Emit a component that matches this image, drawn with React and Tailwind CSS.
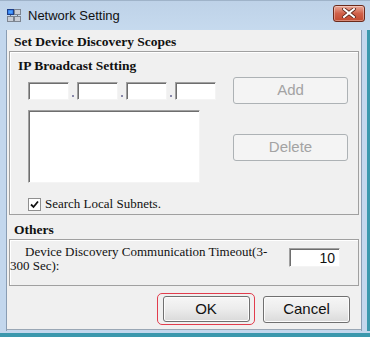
import React from "react";

const SERIF = "font-['Liberation_Serif','Times_New_Roman',serif]";
const SANS = "font-['Liberation_Sans',Arial,sans-serif]";

function NetIcon() {
  return (
    <svg width="14" height="13" viewBox="0 0 14 13">
      <rect x="0.5" y="0.5" width="6" height="5" fill="#2f6fe0" stroke="#1b3f8a" />
      <rect x="1.5" y="1.5" width="4" height="3" fill="#4aa0ff" />
      <rect x="7.5" y="0.5" width="6" height="5" fill="#c9ced6" stroke="#7d8590" />
      <rect x="0.5" y="7.5" width="6" height="5" fill="#c9ced6" stroke="#7d8590" />
      <rect x="7.5" y="7.5" width="6" height="5" fill="#c9ced6" stroke="#7d8590" />
      <line x1="3.5" y1="6" x2="3.5" y2="7" stroke="#6b7280" />
      <line x1="10.5" y1="6" x2="10.5" y2="7" stroke="#6b7280" />
    </svg>
  );
}

function CloseBtn() {
  return (
    <div className="w-[32px] h-[17px] rounded-[3px] border border-[#6b2a1c] bg-gradient-to-b from-[#e9a898] via-[#d0614a] to-[#c24a2f] flex items-center justify-center shadow-[inset_0_0_0_1px_rgba(255,255,255,0.35)]">
      <svg width="14" height="10" viewBox="0 0 14 10">
        <path d="M2 1 L12 9 M12 1 L2 9" stroke="#5a2418" strokeWidth="3.6" strokeLinecap="square" />
        <path d="M2 1 L12 9 M12 1 L2 9" stroke="#ffffff" strokeWidth="2" strokeLinecap="square" />
      </svg>
    </div>
  );
}

function Sunken({ className = "", children }) {
  return (
    <div className={`bg-white border border-t-[#a0a0a0] border-l-[#a0a0a0] border-r-[#f4f4f4] border-b-[#f4f4f4] shadow-[inset_1px_1px_0_#6e6e6e] ${className}`}>
      {children}
    </div>
  );
}

function WinButton({ label, disabled, className = "" }) {
  return (
    <div
      className={`${SANS} flex items-center justify-center rounded-[3px] border text-[15px] ${
        disabled
          ? "border-[#adb2b5] bg-[#f4f4f4] text-[#a3a3a3]"
          : "border-[#707070] bg-gradient-to-b from-[#f6f6f6] via-[#ececec] to-[#dadada] text-[#111] shadow-[inset_0_0_0_1px_#fcfcfc]"
      } ${className}`}
    >
      {label}
    </div>
  );
}

export default function App() {
  return (
    <div className="w-[370px] h-[337px] bg-[#c3d7ed] flex flex-col overflow-hidden border-t border-[#9fb3c9]">
      {/* title bar */}
      <div className="h-[29px] flex items-center bg-gradient-to-b from-[#bed2e8] to-[#c6daee]">
        <div className="ml-[7px] mt-[-1px]">
          <NetIcon />
        </div>
        <span className={`${SANS} ml-[7px] text-[13px] text-[#111]`}>Network Setting</span>
        <div className="ml-auto mr-[5px] mt-[-5px]">
          <CloseBtn />
        </div>
      </div>

      <div className="flex flex-1">
        <div className="w-[7px] bg-[#c3d7ed] border-r border-[#8a9db3]" />
        {/* client */}
        <div className="w-[354px] h-[300px] bg-[#f0f0f0] flex flex-col border-b border-[#9aa7b5]">
          <div className={`${SERIF} h-[21px] pl-[7px] pt-[4px] text-[13.5px] font-bold leading-[16px] text-[#111]`}>
            Set Device Discovery Scopes
          </div>

          <div className="mx-[2px] h-[164px] border border-[#a0a0a0] shadow-[inset_1px_1px_0_#fff]">
            <div className={`${SERIF} h-[25px] pl-[8px] pt-[6px] text-[13.5px] font-bold leading-[16px] text-[#111]`}>
              IP Broadcast Setting
            </div>
            <div className="flex">
              <div className="w-[212px] pl-[18px]">
                <div className="flex items-end mt-[5px]">
                  {[0, 1, 2, 3].map((i) => (
                    <div key={i} className="flex items-end">
                      <Sunken className="w-[41px] h-[18px]" />
                      {i < 3 && (
                        <div className="w-[8px] flex justify-center pb-[3px]">
                          <div className="w-[2px] h-[2px] bg-[#8888aa]" />
                        </div>
                      )}
                    </div>
                  ))}
                </div>
                <Sunken className="mt-[10px] w-[172px] h-[73px]" />
                <div className="mt-[14px] flex items-center">
                  <div className="w-[13px] h-[13px] bg-white border border-[#8f8f8f] flex items-center justify-center">
                    <svg width="9" height="9" viewBox="0 0 9 9">
                      <path d="M1 4.5 L3.5 7 L8 1.5" fill="none" stroke="#111" strokeWidth="1.8" />
                    </svg>
                  </div>
                  <span className={`${SERIF} ml-[4px] text-[13px] leading-[14px] text-[#111]`}>
                    Search Local Subnets.
                  </span>
                </div>
              </div>
              <div className="pl-[11px] flex flex-col">
                <WinButton label="Add" disabled className="w-[115px] h-[27px]" />
                <WinButton label="Delete" disabled className="mt-[30px] w-[115px] h-[27px]" />
              </div>
            </div>
          </div>

          <div className={`${SERIF} h-[24px] pl-[7px] pt-[7px] text-[13.5px] font-bold leading-[16px] text-[#111]`}>
            Others
          </div>

          <div className="mx-[2px] h-[47px] border border-[#a0a0a0] shadow-[inset_1px_1px_0_#fff] flex items-start">
            <div className={`${SERIF} pt-[5px] text-[13px] leading-[14px] text-[#111] indent-[15px]`}>
              Device Discovery Communication Timeout(3-
              <br />
              300 Sec):
            </div>
            <Sunken className="ml-auto mr-[18px] mt-[8px] w-[51px] h-[19px] flex items-center justify-end pr-[4px]">
              <span className={`${SANS} text-[14px] leading-none text-[#111]`}>10</span>
            </Sunken>
          </div>

          <div className="flex justify-end items-center pr-[11px] mt-[7px]">
            <div className="w-[98px] h-[32px] rounded-[5px] border border-[#e23d4d] flex items-center justify-center">
              <WinButton label="OK" className="w-[87px] h-[26px]" />
            </div>
            <WinButton label="Cancel" className="ml-[8px] w-[87px] h-[27px]" />
          </div>
        </div>
        <div className="flex-1 bg-[#c3d7ed] border-l border-[#8a9db3] border-r-[3px] border-r-[#3b98ad]" />
      </div>
      <div className="h-[6px] bg-[#c3d7ed] border-b-[4px] border-[#3b98ad]" />
    </div>
  );
}
